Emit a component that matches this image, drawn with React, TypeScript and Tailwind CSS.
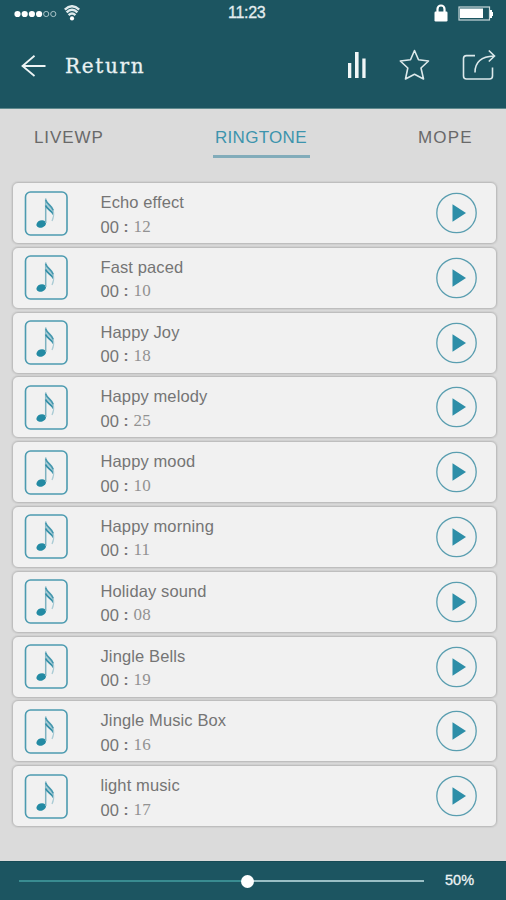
import React from 'react'

const songs = [
  { title: 'Echo effect', sec: '12' },
  { title: 'Fast paced', sec: '10' },
  { title: 'Happy Joy', sec: '18' },
  { title: 'Happy melody', sec: '25' },
  { title: 'Happy mood', sec: '10' },
  { title: 'Happy morning', sec: '11' },
  { title: 'Holiday sound', sec: '08' },
  { title: 'Jingle Bells', sec: '19' },
  { title: 'Jingle Music Box', sec: '16' },
  { title: 'light music', sec: '17' },
]

// Phone status bar
function StatusBar() {
  return (
    <div className="flex h-[26px] items-center pl-[14px] pr-[12px]">
      <svg width="43" height="8" viewBox="0 0 43 8" className="mt-px">
        {[3.5, 10.7, 17.9, 25.1].map((x) => (
          <circle key={x} cx={x} cy="4" r="3.1" fill="#fff" />
        ))}
        {[32.2, 39.3].map((x) => (
          <circle key={x} cx={x} cy="4" r="2.6" fill="none" stroke="#a9c2c7" strokeWidth="1" />
        ))}
      </svg>
      <svg width="16" height="16" viewBox="0 0 16 16" className="ml-[7px]" fill="none" stroke="#dfeaec">
        <path d="M.8 4.6Q8-2 15.2 4.6" strokeWidth="2.5" />
        <path d="M2.6 7.4Q8 2.2 13.4 7.4" strokeWidth="2.4" />
        <path d="M4.6 10.2Q8 6.8 11.4 10.2" strokeWidth="2.4" />
        <circle cx="8" cy="13.4" r="2.1" fill="#fff" stroke="none" />
      </svg>
      <span className="ml-[148px] w-[40px] text-[16px] leading-[24px] tracking-[-0.3px] text-[#e4edef] [-webkit-text-stroke:0.3px_#e4edef]">
        11:23
      </span>
      <svg width="14" height="18" viewBox="0 0 14 18" className="ml-auto">
        <path d="M3.5 8V5a3.5 3.5 0 0 1 7 0v3" fill="none" stroke="#fff" strokeWidth="2.2" />
        <rect x=".5" y="7.5" width="13" height="10" rx="1.2" fill="#fff" />
      </svg>
      <svg width="36" height="15" viewBox="0 0 36 15" className="ml-[10px]">
        <rect x="1" y="1" width="30.5" height="13" fill="none" stroke="#c8d8da" strokeWidth="1.2" />
        <rect x="2" y="2.5" width="23" height="9.5" fill="#fff" />
        <path d="M32 4h2v2h1v4h-1v2h-2z" fill="#fff" />
      </svg>
    </div>
  )
}

function NavBar() {
  return (
    <div className="flex h-[80px] items-center pl-[21px] pr-[10px]">
      <svg width="26" height="24" viewBox="0 0 26 24" fill="none" stroke="#edf4f5" strokeWidth="1.8">
        <path d="M24.5 12H1.5M13.5 1.7L1.5 12l12 10" />
      </svg>
      <span className="ml-[18px] font-['DejaVu_Serif',serif] text-[20px] leading-[24px] tracking-[1.7px] text-[#e9f1f2] [-webkit-text-stroke:0.3px_#e9f1f2]">
        Return
      </span>
      <svg width="21" height="28" viewBox="0 0 21 28" className="ml-auto" fill="#f1f6f7">
        <rect x="2" y="11" width="3.3" height="15" />
        <rect x="9" y="0" width="3.6" height="26" />
        <rect x="16.3" y="6.5" width="3.3" height="19.5" />
      </svg>
      <svg width="32" height="32" viewBox="0 0 32 32" className="ml-[31px] mt-[-3px]" fill="none" stroke="#dce9eb" strokeWidth="1.6" strokeLinejoin="round">
        <path d="M16.5 1.5l4 9.2 10 1.3-7.500 7 2.500 11-9-4.800-9 4.800 2.300-11-7.500-7 10.200-1.300z" />
      </svg>
      <svg width="34" height="32" viewBox="0 0 34 32" className="ml-[32px] mt-[-3px]" fill="none" stroke="#dce9eb" strokeWidth="1.6">
        <path d="M13 6.6H4.5a3 3 0 0 0-3 3V27a3 3 0 0 0 3 3h23a3 3 0 0 0 3-3v-8.5" />
        <path d="M13 23.5C13 14 18.5 7.5 32 7M26.8 1.5L32.5 7l-5.7 5.5" />
      </svg>
    </div>
  )
}

function Tabs() {
  return (
    <div className="flex h-[50px] justify-between pl-[34px] pr-[32px] text-[17px] leading-[20px] text-[#696969]">
      <span className="mt-[19px] w-[71px] tracking-[0.9px]">LIVEWP</span>
      <span className="mt-[19px] h-[30px] w-[97px] border-b-[3px] border-[#82acba] pl-[2px] tracking-[0.3px] text-[#3d94ad]">
        RINGTONE
      </span>
      <span className="mt-[19px] w-[56px] tracking-[1.2px]">MOPE</span>
    </div>
  )
}

function NoteIcon() {
  return (
    <svg width="44" height="45" viewBox="0 0 44 45" className="ml-[11px]">
      <rect x="1.5" y="1" width="41.5" height="43" rx="5" fill="none" stroke="#4c9bb0" strokeWidth="1.6" />
      <ellipse cx="17.2" cy="33" rx="4.9" ry="3.6" transform="rotate(-18 17.2 33)" fill="#238aa3" />
      <path d="M21.7 7.5V32" stroke="#7db2c0" strokeWidth="1.5" />
      <path d="M21.7 8c1 5 7.5 7 8 13l-.5 1c-2-4-5-5-7.5-7.5z" fill="#aacdd7" />
      <path d="M21.7 9c1.5 4.5 6 5.5 7.6 10.5" fill="none" stroke="#4698ae" strokeWidth="1.7" />
      <path d="M21.7 14.5c1.5 4.5 6 4.5 7.6 9" fill="none" stroke="#348fa7" strokeWidth="1.8" />
      <path d="M29.3 19.5c.8 4 .4 7-1.300 10.500" fill="none" stroke="#a9cbd4" strokeWidth="1.2" />
    </svg>
  )
}

function PlayIcon() {
  return (
    <svg width="42" height="42" viewBox="0 0 42 42" className="ml-auto mr-[18px]">
      <circle cx="20.5" cy="21" r="19.7" fill="none" stroke="#5a9eb0" strokeWidth="1.3" />
      <path d="M16.5 12.3L30 21l-13.5 8.7z" fill="#2d8ea8" />
    </svg>
  )
}

function SongRow({ title, sec }: { title: string; sec: string }) {
  return (
    <div className="flex h-[62px] items-center rounded-[6px] border border-[#bebebe] bg-[#f1f1f1] shadow-[0_0_1px_1px_#cfcfcf]">
      <NoteIcon />
      <div className="ml-[32.5px] mt-[3px] text-[#757575]">
        <div className="text-[16.5px] leading-[24px] tracking-[0.12px]">{title}</div>
        <div className="flex h-[25px] items-center text-[16.5px] leading-[24px]">
          <span className="w-[20px]">00</span>
          <span className="w-[11px] text-center text-[15px] font-bold">:</span>
          <span className="ml-[2px] font-['Liberation_Serif',serif] text-[17px] tracking-[0.2px] text-[#929292]">{sec}</span>
        </div>
      </div>
      <PlayIcon />
    </div>
  )
}

// Bottom bar with the volume slider
function VolumeBar() {
  return (
    <div className="flex h-[39px] items-center border-t border-[#174b56] bg-[#1c5561] pl-[19px]">
      <div className="relative flex h-[2px] w-[405px]">
        <div className="w-[228px] bg-[#398c91]" />
        <div className="flex-1 bg-[#9abfc5]" />
        <div className="absolute -top-[5px] left-[222px] h-[13px] w-[13px] rounded-full bg-white" />
      </div>
      <span className="-mt-[2px] ml-[21px] text-[14.5px] leading-[20px] text-[#edf3f4] [-webkit-text-stroke:0.3px_#edf3f4]">
        50%
      </span>
    </div>
  )
}

export default function App() {
  return (
    <div className="flex h-[900px] w-[506px] flex-col overflow-hidden bg-[#dbdbdb] font-['Liberation_Sans',sans-serif]">
      <header className="h-[109px] border-b border-[#608a8e] bg-[#1c5561]">
        <StatusBar />
        <NavBar />
      </header>
      <Tabs />
      <main className="mt-[23px] flex flex-1 flex-col gap-[2.8px] pl-[12px] pr-[9px]">
        {songs.map((song) => (
          <SongRow key={song.title} {...song} />
        ))}
      </main>
      <VolumeBar />
    </div>
  )
}
